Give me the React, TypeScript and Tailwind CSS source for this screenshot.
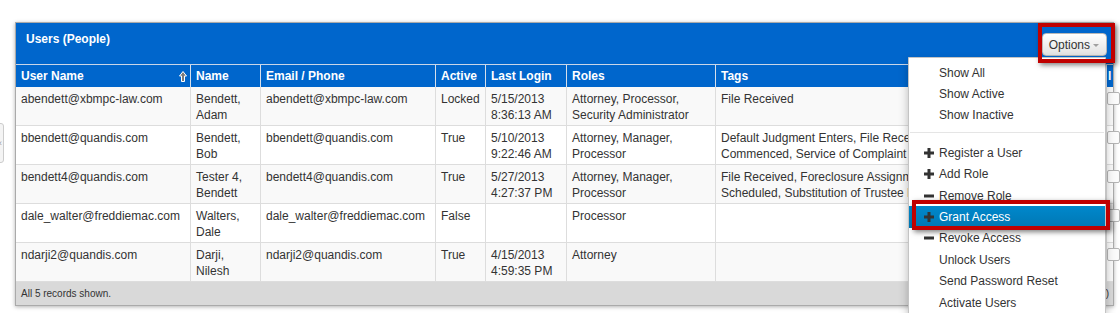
const cols = 'grid grid-cols-[175px_70px_175px_50px_81px_149px_391px_1fr]';

type Row = {
  user: string;
  name: string[];
  email: string;
  active: string;
  login: string[];
  roles: string[];
  tags: string[];
};

const rows: Row[] = [
  {
    user: 'abendett@xbmpc-law.com',
    name: ['Bendett,', 'Adam'],
    email: 'abendett@xbmpc-law.com',
    active: 'Locked',
    login: ['5/15/2013', '8:36:13 AM'],
    roles: ['Attorney, Processor,', 'Security Administrator'],
    tags: ['File Received'],
  },
  {
    user: 'bbendett@quandis.com',
    name: ['Bendett,', 'Bob'],
    email: 'bbendett@quandis.com',
    active: 'True',
    login: ['5/10/2013', '9:22:46 AM'],
    roles: ['Attorney, Manager,', 'Processor'],
    tags: ['Default Judgment Enters, File Received, Foreclosure Sale', 'Commenced, Service of Complaint Filed'],
  },
  {
    user: 'bendett4@quandis.com',
    name: ['Tester 4,', 'Bendett'],
    email: 'bendett4@quandis.com',
    active: 'True',
    login: ['5/27/2013', '4:27:37 PM'],
    roles: ['Attorney, Manager,', 'Processor'],
    tags: ['File Received, Foreclosure Assignment Recorded, Sale', 'Scheduled, Substitution of Trustee Recorded'],
  },
  {
    user: 'dale_walter@freddiemac.com',
    name: ['Walters,', 'Dale'],
    email: 'dale_walter@freddiemac.com',
    active: 'False',
    login: [],
    roles: ['Processor'],
    tags: [],
  },
  {
    user: 'ndarji2@quandis.com',
    name: ['Darji,', 'Nilesh'],
    email: 'ndarji2@quandis.com',
    active: 'True',
    login: ['4/15/2013', '4:59:35 PM'],
    roles: ['Attorney'],
    tags: [],
  },
];

function Cell({ lines }: { lines: string[] }) {
  return (
    <div className="overflow-hidden whitespace-nowrap border-r border-[#dddddd] px-[5px] pt-[4px] leading-4">
      {lines.map((l, i) => (
        <div key={i}>{l}</div>
      ))}
    </div>
  );
}

function SortArrow() {
  return (
    <svg width="8" height="11" viewBox="0 0 8 11">
      <path d="M4 0.5 L7.5 5 H5.5 V10.5 H2.5 V5 H0.5 Z" fill="#7a7a7a" stroke="#ffffff" strokeWidth="1" />
    </svg>
  );
}

function PlusIcon() {
  return (
    <svg width="10" height="10" viewBox="0 0 10 10" className="shrink-0">
      <rect x="0" y="3.5" width="10" height="3" fill="#333333" />
      <rect x="3.5" y="0" width="3" height="10" fill="#333333" />
    </svg>
  );
}

function MinusIcon() {
  return (
    <svg width="10" height="10" viewBox="0 0 10 10" className="shrink-0">
      <rect x="0" y="3.5" width="10" height="3" fill="#333333" />
    </svg>
  );
}

function MenuItem({ label, icon, active }: { label: string; icon?: 'plus' | 'minus'; active?: boolean }) {
  return (
    <div
      className={`flex h-[21.4px] items-center gap-[5px] pl-[15px] leading-[14px] ${
        active ? 'bg-gradient-to-b from-[#0088cc] to-[#0077b3] text-white' : 'text-[#333333]'
      }`}
    >
      <span className="flex w-[10px] shrink-0 items-center">
        {icon === 'plus' && <PlusIcon />}
        {icon === 'minus' && <MinusIcon />}
      </span>
      <span>{label}</span>
    </div>
  );
}

export default function App() {
  return (
    <div
      className="relative h-[313px] w-[1120px] overflow-hidden bg-white text-[12px] text-[#333333]"
      style={{ fontFamily: '"Liberation Sans", Arial, sans-serif' }}
    >
      {/* collapsed side tab */}
      <div className="absolute left-[-8px] top-[123px] flex h-[40px] w-[12px] items-center justify-end rounded-[3px] border border-[#cccccc] bg-[#f4f4f4] pr-[1px] text-[9px] leading-none text-[#999999]">
        ‹
      </div>

      {/* panel */}
      <div className="ml-[15px] mt-[22px] w-[1099px] border border-[#aaaaaa] shadow-[0_1px_4px_rgba(0,0,0,0.3)]">
        <div className="flex h-[41px] items-start justify-between bg-[#0066cc] pl-[10px] pr-[6px] pt-[8px]">
          <div className="font-bold leading-4 text-white">Users (People)</div>
          <button className="mt-[2px] flex h-[23px] items-center gap-[3px] rounded-[4px] border border-[#b8b8b8] bg-gradient-to-b from-[#ffffff] to-[#e2e2e2] pl-[6px] pr-[7px] text-[12px] text-[#333333]">
            Options
            <span className="mt-[1px] h-0 w-0 border-x-[3px] border-t-[3px] border-x-transparent border-t-[#a0a0a0]" />
          </button>
        </div>

        {/* header row */}
        <div className={`${cols} h-[23px] border-t border-[#c9d6e8] bg-[#0066cc] font-bold text-white`}>
          <div className="flex items-center justify-between border-r border-[#d6dfeb] pl-[5px] pr-[3px]">
            <span>User Name</span>
            <SortArrow />
          </div>
          <div className="flex items-center border-r border-[#d6dfeb] pl-[5px]">Name</div>
          <div className="flex items-center border-r border-[#d6dfeb] pl-[5px]">Email / Phone</div>
          <div className="flex items-center border-r border-[#d6dfeb] pl-[5px]">Active</div>
          <div className="flex items-center border-r border-[#d6dfeb] pl-[5px]">Last Login</div>
          <div className="flex items-center border-r border-[#d6dfeb] pl-[5px]">Roles</div>
          <div className="flex items-center border-r border-[#d6dfeb] pl-[5px]">Tags</div>
          <div className="flex items-center overflow-hidden pl-[1px]">I</div>
        </div>

        {/* body */}
        {rows.map((r, i) => (
          <div
            key={r.user}
            className={`${cols} h-[39px] border-b border-[#dddddd] ${i % 2 === 0 ? 'bg-[#f9f9f9]' : 'bg-white'}`}
          >
            <Cell lines={[r.user]} />
            <Cell lines={r.name} />
            <Cell lines={[r.email]} />
            <Cell lines={[r.active]} />
            <Cell lines={r.login} />
            <Cell lines={r.roles} />
            <Cell lines={r.tags} />
            <div className="pt-[5px]">
              <div className="h-[13px] w-[13px] rounded-[2px] border border-[#b4b4b4] bg-[#fbfbfb]" />
            </div>
          </div>
        ))}

        {/* footer */}
        <div className="flex h-[23px] items-center justify-between bg-[#d9d9d9] pl-[5px] pr-[4px] text-[10px]">
          <span>All 5 records shown.</span>
          <span>Page 1 of 1 (5)</span>
        </div>
      </div>

      {/* options dropdown */}
      <div className="absolute left-[908px] top-[57px] w-[198px] rounded-b-[4px] border border-[#c4c4c4] bg-white pb-[5px] pt-[4px] shadow-[0_5px_10px_rgba(0,0,0,0.25)]">
        <MenuItem label="Show All" />
        <MenuItem label="Show Active" />
        <MenuItem label="Show Inactive" />
        <div className="mx-[1px] mb-[9px] mt-[6px] h-px bg-[#e5e5e5]" />
        <MenuItem label="Register a User" icon="plus" />
        <MenuItem label="Add Role" icon="plus" />
        <MenuItem label="Remove Role" icon="minus" />
        <MenuItem label="Grant Access" icon="plus" active />
        <MenuItem label="Revoke Access" icon="minus" />
        <MenuItem label="Unlock Users" />
        <MenuItem label="Send Password Reset" />
        <MenuItem label="Activate Users" />
      </div>

      {/* highlight boxes */}
      <div className="absolute left-[1038px] top-[23px] h-[40px] w-[77px] border-4 border-[#c00000] shadow-[2px_2px_5px_rgba(0,0,0,0.5)]" />
      <div className="absolute left-[912px] top-[200px] h-[30px] w-[198px] border-4 border-[#c00000] shadow-[2px_2px_5px_rgba(0,0,0,0.5)]" />
    </div>
  );
}
